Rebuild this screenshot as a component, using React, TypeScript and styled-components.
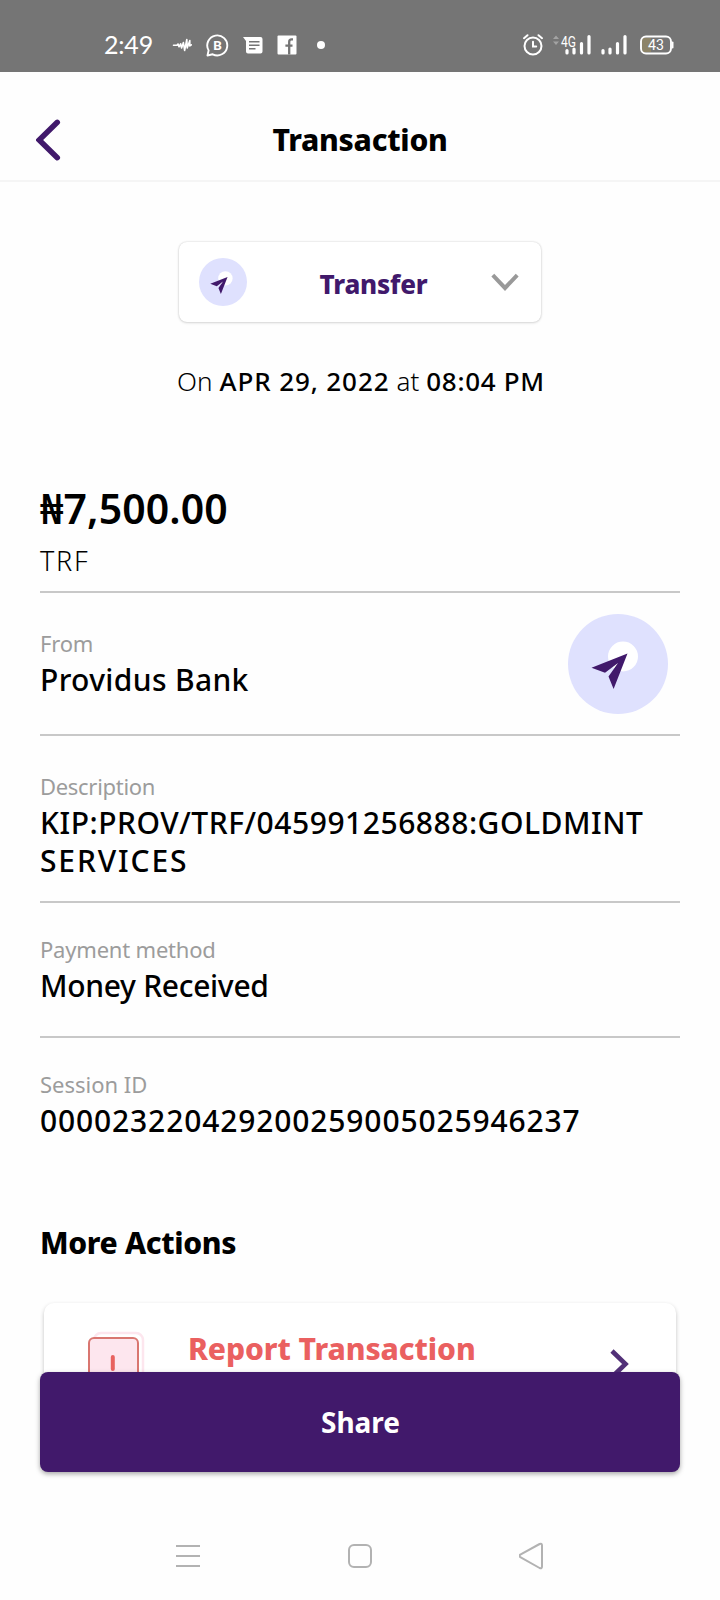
import React from 'react';
import styled, { createGlobalStyle } from 'styled-components';

const PURPLE = '#41196b';
const LINE = '#c8c8c8';

const GlobalStyle = createGlobalStyle`
  * { box-sizing: border-box; }
  body { margin: 0; background: #fefefe; }
  svg { display: block; flex: none; }
`;

const Screen = styled.div`
  width: 720px;
  height: 1600px;
  display: flex;
  flex-direction: column;
  background: #fefefe;
  color: #000;
  overflow: hidden;
  font-family: 'Noto Sans', 'Open Sans', sans-serif;
`;

const StatusBar = styled.div`
  flex: none;
  height: 72px;
  padding: 18px 46px 0 104px;
  background: #757575;
  color: #fff;
  display: flex;
  align-items: center;
  justify-content: space-between;
`;

const StatusGroup = styled.div<{ $gap: number }>`
  display: flex;
  align-items: center;
  gap: ${(p) => p.$gap}px;
`;

const Clock = styled.span`
  width: 54px;
  padding-bottom: 2px;
  font: 400 25px/30px Lato, sans-serif;
  letter-spacing: -0.2px;
`;

const Battery = styled.div`
  padding-left: 3px;
`;

const Header = styled.header`
  flex: none;
  height: 110px;
  padding: 28px 36px 0;
  border-bottom: 2px solid #f5f5f5;
  display: grid;
  grid-template-columns: 60px 1fr 60px;
  align-items: center;
`;

const Title = styled.h1`
  margin: 0;
  text-align: center;
  font-size: 30px;
  line-height: 38px;
  font-weight: 800;
  letter-spacing: -0.25px;
`;

const Main = styled.main`
  position: relative;
  flex: none;
  height: 1318px;
  padding: 60px 40px 0;
  overflow: hidden;
`;

const TypeSelect = styled.div`
  width: 362px;
  height: 80px;
  margin: 0 auto;
  padding: 0 22px 0 20px;
  border-radius: 8px;
  background: #fff;
  box-shadow: 0 0 2px rgba(0, 0, 0, 0.18), 0 1px 3px rgba(0, 0, 0, 0.12);
  display: grid;
  grid-template-columns: 48px 1fr 28px;
  align-items: center;
`;

const TypeName = styled.span`
  padding: 3px 0 0 9px;
  text-align: center;
  color: ${PURPLE};
  font-size: 26px;
  line-height: 34px;
  font-weight: 800;
  letter-spacing: -0.2px;
`;

const DateLine = styled.p`
  margin: 41px 0 0;
  padding-left: 137px;
  display: flex;
  gap: 7px;
  font-size: 26px;
  line-height: 36px;
  font-weight: 300;
  white-space: nowrap;
`;

const Strong = styled.b<{ $track: number }>`
  font-weight: 500;
  letter-spacing: ${(p) => p.$track}px;
`;

const AmountBlock = styled.section`
  margin-top: 83px;
  height: 111px;
  padding-top: 1px;
  border-bottom: 2px solid ${LINE};
`;

const Amount = styled.div`
  font-size: 41px;
  line-height: 50px;
  font-weight: 600;
  letter-spacing: 0.1px;
`;

const Kind = styled.div`
  margin-top: 11px;
  font-size: 27px;
  line-height: 34px;
  font-weight: 300;
  letter-spacing: 1.7px;
`;

const Detail = styled.section<{ $top: number; $bottom: number; $last?: boolean }>`
  padding: ${(p) => p.$top}px 0 ${(p) => p.$bottom}px;
  border-bottom: ${(p) => (p.$last ? 'none' : `2px solid ${LINE}`)};
  display: flex;
  justify-content: space-between;
`;

const Label = styled.div<{ $track?: number }>`
  color: #9c9c9c;
  font-size: 22px;
  line-height: 28px;
  font-weight: 400;
  letter-spacing: ${(p) => p.$track ?? 0}px;
`;

const Value = styled.div<{ $track?: number }>`
  margin-top: 4px;
  font-size: 30px;
  line-height: 38px;
  font-weight: 500;
  letter-spacing: ${(p) => p.$track ?? 0}px;
  white-space: nowrap;
`;

const WideLine = styled.div`
  letter-spacing: 1.85px;
`;

const Badge = styled.div`
  height: 69px;
  margin: -15px 12px 0 0;
`;

const SectionTitle = styled.h2`
  margin: 84px 0 0;
  font-size: 30px;
  line-height: 38px;
  font-weight: 800;
  letter-spacing: -0.35px;
`;

const ActionCard = styled.div`
  height: 130px;
  margin: 41px 4px 0;
  padding: 26px 46px 0 44px;
  border-radius: 10px;
  background: #fff;
  box-shadow: 0 2px 4px rgba(0, 0, 0, 0.24);
  display: flex;
  align-items: flex-start;
`;

const ActionName = styled.span`
  flex: 1;
  padding: 1px 0 0 43px;
  color: #ea6060;
  font-size: 30px;
  line-height: 38px;
  font-weight: 800;
  letter-spacing: -0.08px;
`;

const ActionArrow = styled.span`
  padding-top: 20px;
`;

const ShareButton = styled.button`
  position: absolute;
  left: 40px;
  right: 40px;
  bottom: 28px;
  height: 100px;
  padding: 0 0 0 1px;
  border: 0;
  border-radius: 8px;
  background: ${PURPLE};
  color: #fff;
  box-shadow: 0 2px 5px rgba(0, 0, 0, 0.35);
  font: 700 28px/36px 'Noto Sans', sans-serif;
`;

const NavBar = styled.nav`
  flex: 1;
  padding: 12px 175px 0;
  display: flex;
  align-items: center;
  justify-content: space-between;
`;

function SendMark({ size }: { size: number }) {
  return (
    <svg width={size} height={size} viewBox="0 0 100 100">
      <circle cx="50" cy="50" r="50" fill="#dfe1fe" />
      <circle cx="55" cy="42.5" r="15" fill="#fff" />
      <path d="M59.5 39.5 23.5 53.8 37 58.8 50 49 40.5 62.5 45.6 75Z" fill={PURPLE} />
    </svg>
  );
}

function Bars({ network }: { network?: boolean }) {
  return (
    <svg width={network ? 38 : 26} height="24" viewBox={network ? '0 0 38 24' : '12 0 26 24'}>
      {network && (
        <>
          <path d="M0 6 3 2.5 6 6zM0 8.5 3 12 6 8.5z" fill="#a3a3a3" />
          <text
            x="8"
            y="13.8"
            fontSize="14"
            fontFamily="Roboto, sans-serif"
            fill="#fff"
            textLength="15"
            lengthAdjust="spacingAndGlyphs"
          >
            4G
          </text>
        </>
      )}
      <path d="M14 17.5v2.5M21 16v4M28.5 10.5v9.5M36 3.5v16.5" stroke="#fff" strokeWidth="3.2" strokeLinecap="round" />
    </svg>
  );
}

export default function App() {
  return (
    <Screen>
      <GlobalStyle />
      <StatusBar>
        <StatusGroup $gap={14}>
          <Clock>2:49</Clock>
          <svg width="20" height="16" viewBox="0 0 20 16" fill="none" stroke="#fff" strokeWidth="1.6" strokeLinejoin="round" strokeLinecap="round">
            <path d="M1.5 8.3H5L6 7 7 9.8 8.6 6.8 9.6 11 11.4 5.5 12.6 13.5 14.8 2.5 15.2 11 17.8 3.5 17.8 9 19.3 7.8" />
          </svg>
          <svg width="23" height="23" viewBox="0 0 23 23" fill="none" stroke="#fff" strokeWidth="1.9">
            <path d="M1.5 21.5 2.6 16.4A10 10 0 1 1 6.7 20.3Z" strokeLinejoin="round" />
            <text x="7.3" y="16" fontSize="13.5" fontWeight="700" fontFamily="Roboto, sans-serif" fill="#fff" stroke="none">
              B
            </text>
          </svg>
          <svg width="20" height="17" viewBox="0 0 20 17">
            <path d="M0 0H17.5Q19.5 0 19.5 2V14.5Q19.5 16.5 17.5 16.5H5Q3 16.5 3 14.5V4Z" fill="#fff" />
            <path d="M6 4.7H16.5M6 8.2H16.5M6 11.8H12.5" stroke="#757575" strokeWidth="1.6" />
          </svg>
          <svg width="20" height="20" viewBox="0 0 20 20">
            <rect x="0.5" y="0.5" width="19" height="19" rx="1" fill="#fff" />
            <path d="M16 4.3H14.6Q12.2 4.3 12.2 6.8V19.5M8.4 10.6H15.5" fill="none" stroke="#757575" strokeWidth="2.3" />
          </svg>
          <svg width="28" height="10" viewBox="0 0 28 10">
            <circle cx="10" cy="5" r="4" fill="#fff" />
          </svg>
        </StatusGroup>
        <StatusGroup $gap={10}>
          <svg width="20" height="22" viewBox="0 0 20 22" fill="none" stroke="#fff" strokeWidth="2" strokeLinecap="round">
            <circle cx="10" cy="12" r="8.5" />
            <path d="M10 7.8V12.4H13.2M1 4.2 4.5 1.2M19 4.2 15.5 1.2" />
          </svg>
          <Bars network />
          <Bars />
          <Battery>
            <svg width="34" height="20" viewBox="0 0 34 20">
              <path d="M3 3H11V17H3Q1.5 15 1.5 10Q1.5 5 3 3Z" fill="#8d8468" />
              <rect x="1" y="1.5" width="30" height="17" rx="5" fill="none" stroke="#fff" strokeWidth="1.9" />
              <path d="M32.6 7.5V12.5" stroke="#fff" strokeWidth="1.8" strokeLinecap="round" />
              <text x="8" y="15.2" fontSize="14.5" textLength="16" lengthAdjust="spacingAndGlyphs" fontFamily="Roboto, sans-serif" fill="#fff">
                43
              </text>
            </svg>
          </Battery>
        </StatusGroup>
      </StatusBar>

      <Header>
        <svg width="25" height="42" viewBox="0 0 25 42">
          <path d="M21.3 3.3 3.2 21 21.3 38.7" fill="none" stroke={PURPLE} strokeWidth="5.5" strokeLinecap="round" />
        </svg>
        <Title>Transaction</Title>
      </Header>

      <Main>
        <TypeSelect>
          <SendMark size={48} />
          <TypeName>Transfer</TypeName>
          <svg width="28" height="20" viewBox="0 0 28 20">
            <path d="M1.8 3.2 14 16 26.2 3.2" fill="none" stroke="#999" strokeWidth="4" />
          </svg>
        </TypeSelect>

        <DateLine>
          <span>On</span>
          <Strong $track={0.9}>APR 29, 2022</Strong>
          <span>at</span>
          <Strong $track={0.7}>08:04 PM</Strong>
        </DateLine>

        <AmountBlock>
          <Amount>₦7,500.00</Amount>
          <Kind>TRF</Kind>
        </AmountBlock>

        <Detail $top={36} $bottom={35}>
          <div>
            <Label $track={-0.2}>From</Label>
            <Value $track={0.35}>Providus Bank</Value>
          </div>
          <Badge>
            <SendMark size={100} />
          </Badge>
        </Detail>

        <Detail $top={36} $bottom={21}>
          <div>
            <Label $track={-0.3}>Description</Label>
            <Value $track={0.53}>
              KIP:PROV/TRF/045991256888:GOLDMINT
              <WideLine>SERVICES</WideLine>
            </Value>
          </div>
        </Detail>

        <Detail $top={32} $bottom={31}>
          <div>
            <Label $track={-0.2}>Payment method</Label>
            <Value $track={-0.3}>Money Received</Value>
          </div>
        </Detail>

        <Detail $top={32} $bottom={0} $last>
          <div>
            <Label>Session ID</Label>
            <Value $track={0.86}>000023220429200259005025946237</Value>
          </div>
        </Detail>

        <SectionTitle>More Actions</SectionTitle>

        <ActionCard>
          <svg width="57" height="62" viewBox="0 0 57 62">
            <rect x="6" y="4" width="49" height="54" rx="7" fill="#fff" stroke="#fde6ee" strokeWidth="2.5" />
            <rect x="1" y="9" width="49" height="52" rx="5" fill="#fde6ee" stroke="#d97670" strokeWidth="2" />
            <path d="M24.8 28V40" stroke="#e8625f" strokeWidth="4" strokeLinecap="round" />
          </svg>
          <ActionName>Report Transaction</ActionName>
          <ActionArrow>
            <svg width="20" height="30" viewBox="0 0 20 30">
              <path d="M2 2 15.5 15 2 28" fill="none" stroke="#523078" strokeWidth="4.6" />
            </svg>
          </ActionArrow>
        </ActionCard>

        <ShareButton>Share</ShareButton>
      </Main>

      <NavBar>
        <svg width="26" height="28" viewBox="0 0 26 28" stroke="#b2b2b2" strokeWidth="2">
          <path d="M1 4H25M1 14H25M1 24H25" />
        </svg>
        <svg width="26" height="28" viewBox="0 0 26 28" fill="none" stroke="#b2b2b2" strokeWidth="2">
          <rect x="2" y="3" width="22" height="22" rx="5" />
        </svg>
        <svg width="26" height="28" viewBox="0 0 26 28" fill="none" stroke="#b2b2b2" strokeWidth="2" strokeLinejoin="round">
          <path d="M1.3 12.6 20.6 2Q23 1 23 3.5V24.5Q23 27 20.6 26L1.3 15.2Q-0.3 13.9 1.3 12.6Z" />
        </svg>
      </NavBar>
    </Screen>
  );
}
